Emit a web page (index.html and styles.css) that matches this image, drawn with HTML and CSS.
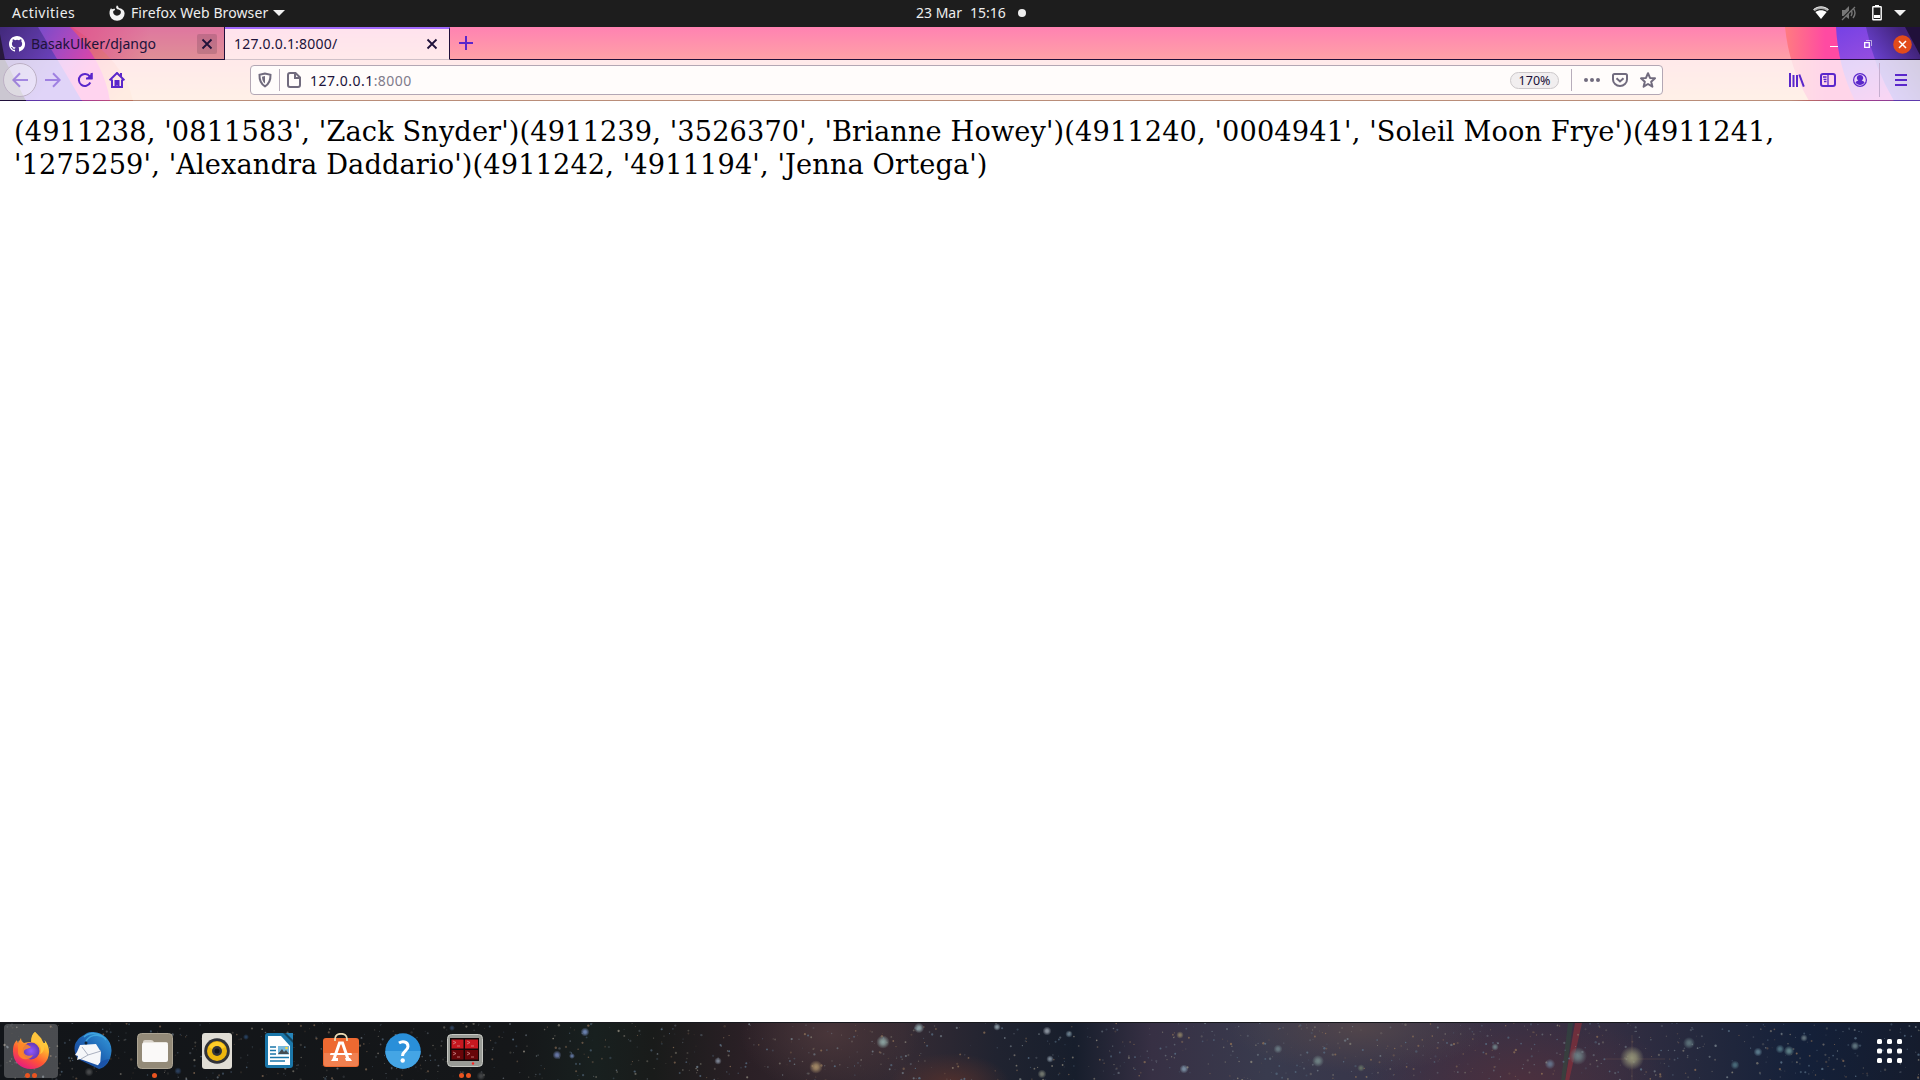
FILE: index.html
```
<!DOCTYPE html>
<html lang="en">
<head>
<meta charset="utf-8">
<title>127.0.0.1:8000/</title>
<link rel="stylesheet" href="styles.css">
</head>
<body>
<div class="desktop">
  <header class="topbar">
    <div class="topbar-left">
      <span class="activities">Activities</span>
      <svg class="app-icon" width="16" height="16" viewBox="0 0 16 16"><path fill="#f2f2f2" d="M8 0.2C9 1 9.6 2 9.7 3c3 .5 5.900 2 5.900 5.500A7.500 7.200 0 0 1 .5 8.600C.4 5.500 1.400 4 2.300 3c0 .7.2 1 .5 1.300C3.500 3.900 5 3.500 6.100 3.900L5.700 5.300 4.300 6c-.6 2.500 1.200 4.700 3.700 4.700 2.400 0 3.900-1.600 3.900-3.600C11.800 4.700 9.600 4.900 8.400 4.300 6.800 3.500 6.800 1.700 8 .2Z"/></svg>
      <span class="app-name">Firefox Web Browser</span>
      <svg width="12" height="6" viewBox="0 0 12 6"><path fill="#f2f2f2" d="M0 0h12L6 6z"/></svg>
    </div>
    <div class="clock"><span class="date">23 Mar</span><span class="time">15:16</span><i class="notice"></i></div>
    <div class="status">
      <svg width="16" height="14" viewBox="0 0 16 14"><path fill="#aaa" d="M.3 3.500C5 0 11 0 15.700 3.500L14.300 5.200C10.500 2.300 5.500 2.300 1.700 5.200z"/><path d="M.5 3.600C5-.1 11-.1 15.500 3.600" fill="none" stroke="#fff"/><path fill="#fff" d="M2.300 6C6 3.500 10 3.500 13.700 6L8 13z"/></svg>
      <svg width="16" height="16" viewBox="0 0 16 16"><path fill="#777" d="M1 5h3l4-4v13L4 11H1z"/><path d="M10 5q2 3 0 6M12 3q4 5 0 10" fill="none" stroke="#777" stroke-width="1.400"/><path d="M1 14 14 1" stroke="#1d1d1d" stroke-width="2"/><path d="M1 15 14 2" stroke="#777" stroke-width="1.300"/></svg>
      <svg width="10" height="16" viewBox="0 0 10 16"><path fill="#fff" d="M3 0h4v2H3z"/><rect x=".8" y="1.800" width="8.400" height="13" rx=".5" fill="none" stroke="#fff" stroke-width="1.400"/><path fill="#fff" d="M2 10h6v3H2z"/></svg>
      <svg width="12" height="6" viewBox="0 0 12 6"><path fill="#f2f2f2" d="M0 0h12L6 6z"/></svg>
    </div>
  </header>

  <section class="browser-chrome">
    <svg class="theme" width="1920" height="74" viewBox="0 0 1920 74" aria-hidden="true">
      <defs>
        <linearGradient id="sky" x1="0" y1="0" x2="0" y2="1"><stop offset="0" stop-color="#ff82b2"/><stop offset=".45" stop-color="#ffa2a6"/><stop offset="1" stop-color="#ffc09a"/></linearGradient>
        <linearGradient id="l1" gradientUnits="userSpaceOnUse" x1="0" y1="0" x2="60" y2="40"><stop offset="0" stop-color="#402485"/><stop offset="1" stop-color="#7946df"/></linearGradient>
        <linearGradient id="l2" gradientUnits="userSpaceOnUse" x1="40" y1="0" x2="95" y2="34"><stop offset="0" stop-color="#844de5"/><stop offset=".5" stop-color="#c04bd8"/><stop offset="1" stop-color="#ff46bb"/></linearGradient>
        <linearGradient id="l3" gradientUnits="userSpaceOnUse" x1="72" y1="0" x2="133" y2="60"><stop offset="0" stop-color="#ff4c90"/><stop offset="1" stop-color="#ffae80"/></linearGradient>
        <linearGradient id="l4" gradientUnits="userSpaceOnUse" x1="70" y1="0" x2="150" y2="0"><stop offset="0" stop-color="#ff5c9c"/><stop offset="1" stop-color="#ff5c9c" stop-opacity="0"/></linearGradient>
        <linearGradient id="r1"><stop offset="0" stop-color="#ff7c80"/><stop offset=".3" stop-color="#ff4aa2"/><stop offset="1" stop-color="#ff4aa2"/></linearGradient>
        <linearGradient id="r2" x1="0" y1="0" x2=".5" y2="1"><stop offset="0" stop-color="#7541e5"/><stop offset=".5" stop-color="#944ddf"/><stop offset="1" stop-color="#e050d0"/></linearGradient>
        <linearGradient id="r3" x1="0" y1="1" x2="1" y2="0"><stop offset=".2" stop-color="#784bec"/><stop offset=".8" stop-color="#42247c"/></linearGradient>
      </defs>
      <path fill="url(#sky)" d="M0 0h1920v74H0z"/>
      <path fill="url(#l4)" d="M70 0h80v33H96z"/>
      <path fill="url(#l3)" d="M0 0h72Q126 35 133 74H0z"/>
      <path fill="url(#l2)" d="M0 0h70Q104 34 110 74H0z"/>
      <path fill="url(#l1)" d="M0 0h38L82 74H0z"/>
      <path fill="#20103a" d="M0 7 5 33 26 74H0z"/>
      <path fill="url(#r1)" d="M1785 0Q1789 40 1809 74H1920V0z"/>
      <path fill="url(#r2)" d="M1836 0Q1838 40 1855 74H1920V0z"/>
      <path fill="url(#r3)" d="M1866 0Q1874 40 1894 74H1920V0z"/>
      <path fill="#20103a" d="M1905 0 1920 28V0z"/>
    </svg>
    <div class="tabstrip">
      <div class="tab">
        <svg class="favicon" width="16" height="16" viewBox="0 0 16 16"><path fill="#fff" d="M8 0C3.580 0 0 3.580 0 8c0 3.540 2.290 6.530 5.470 7.590.4.070.55-.17.55-.38v-1.490c-2.010.37-2.530-.49-2.690-.94-.09-.23-.48-.94-.82-1.130-.28-.15-.68-.52-.01-.53.630-.010 1.080.580 1.230.820.720 1.210 1.870.870 2.330.660.070-.520.280-.870.510-1.070-1.780-.2-3.640-.890-3.640-3.950 0-.870.310-1.590.820-2.150-.080-.2-.360-1.020.080-2.120 0 0 .670-.210 2.200.820a7.600 7.600 0 0 1 4 0c1.530-1.040 2.200-.820 2.200-.820.440 1.100.160 1.920.080 2.120.510.560.820 1.270.820 2.150 0 3.070-1.870 3.750-3.650 3.950.290.250.540.730.540 1.480v2.200c0 .210.150.460.550.380A8 8 0 0 0 8 0"/></svg>
        <span class="tab-title">BasakUlker/django</span>
        <span class="tab-close shaded"><svg width="12" height="12" viewBox="0 0 12 12"><path d="m1.500 1.500 9 9m0-9-9 9"/></svg></span>
      </div>
      <div class="tab selected">
        <span class="tab-title tab-title-local">127.0.0.1:8000/</span>
        <span class="tab-close"><svg width="12" height="12" viewBox="0 0 12 12"><path d="m1.500 1.500 9 9m0-9-9 9"/></svg></span>
      </div>
      <svg class="newtab" width="14" height="14" viewBox="0 0 14 14"><path d="M7 0v14M0 7h14" stroke="#5a27cb" stroke-width="2"/></svg>
      <div class="window-buttons">
        <svg width="8" height="8" viewBox="0 0 8 8"><path fill="#fff" d="M0 6h8v1H0z"/></svg>
        <svg width="8" height="8" viewBox="0 0 8 8"><path d="M2 .5h5.500V6" fill="none" stroke="#fff" opacity=".55"/><path d="M.7 2.700h4.600v4.600H.7z" fill="none" stroke="#fff" stroke-width="1.300"/></svg>
        <svg width="19" height="19" viewBox="0 0 19 19"><circle cx="9.500" cy="9.500" r="9.300" fill="#e24b1a"/><path d="m6 6 7 7m0-7-7 7" stroke="#fff" stroke-width="1.500"/></svg>
      </div>
    </div>
    <div class="toolbar">
      <div class="nav">
        <span class="back"><svg width="16" height="16" viewBox="0 0 16 16"><path d="M16 8H1.500M8 1.300 1.300 8 8 14.700" /></svg></span>
        <svg class="forward" width="16" height="16" viewBox="0 0 16 16"><path d="M0 8h14.500M8 1.300 14.700 8 8 14.700"/></svg>
        <svg class="strong" width="16" height="16" viewBox="0 0 16 16"><path d="M13.300 10.500A6 6 0 1 1 12.700 4.300M14.600 1v5.500H9"/><path d="M15.500.5V7H9z" fill="#5a27cb" stroke="none"/></svg>
        <svg class="strong" width="16" height="16" viewBox="0 0 16 16"><path d="M.6 8.300 8 1l7.400 7.300M3 7.500V15h10V7.500M12 1v3.500"/><path fill="#5a27cb" stroke="none" d="M5.500 8h5v8h-2v-2.500h-1V16h-2z"/></svg>
      </div>
      <div class="urlbar">
        <svg class="grey shield" width="14" height="16" viewBox="0 0 14 16"><path d="M7 1.500 1.500 2.700C1.300 8 2.300 11.500 7 14.300 11.700 11.500 12.700 8 12.500 2.700z"/><path stroke="none" fill="#716b7e" d="M7 4 4 4.700c0 3 .8 5 3 6.800z"/></svg>
        <i class="rule"></i>
        <svg class="grey page-icon" width="14" height="16" viewBox="0 0 14 16"><path d="M3 1h5.500L13 5.500V13q0 2-2 2H3q-2 0-2-2V3q0-2 2-2ZM8 1v5h5"/></svg>
        <span class="address">127.0.0.1<span class="port">:8000</span></span>
        <span class="zoom">170%</span>
        <i class="rule"></i>
        <svg class="dots" width="16" height="4" viewBox="0 0 16 4"><g fill="#716b7e" stroke="none"><circle cx="2" cy="2" r="2"/><circle cx="8" cy="2" r="2"/><circle cx="14" cy="2" r="2"/></g></svg>
        <svg class="grey pocket" width="16" height="14" viewBox="0 0 16 14"><path d="M2.500 1h11Q15 1 15 2.500V6.500a7 6.500 0 0 1-14 0V2.500Q1 1 2.500 1ZM4.500 5.200 8 8.500l3.500-3.300"/></svg>
        <svg class="grey star" width="16" height="16" viewBox="0 0 16 16"><path stroke-linejoin="round" d="m8 1.200 2 4.700 5 .4-3.800 3.400 1.200 5L8 12l-4.400 2.700 1.200-5L1 6.300l5-.4z"/></svg>
      </div>
      <div class="tools">
        <svg width="16" height="14" viewBox="0 0 16 14"><path d="M1 0v14M4.500 2v12M8 2v12M10.300 1.500l4.500 12.200"/></svg>
        <svg width="16" height="14" viewBox="0 0 16 14"><rect x="1" y="1" width="14" height="12" rx="2"/><path stroke-width="1.300" d="M8 1v12M3 4h3.500M3.500 6.300h3M4 8.500h2.500"/></svg>
        <svg width="14" height="14" viewBox="0 0 14 14"><circle cx="7" cy="7" r="6.400" stroke-width="1.200"/><path fill="#5a27cb" stroke="none" d="M7 2a3 3 0 0 1 1.700 5.600C10.800 8 11 9 11.500 9.500 10 12.800 4 12.800 2.500 9.500 3 9 3.200 8 5.300 7.600A3 3 0 0 1 7 2"/></svg>
        <i class="tool-rule"></i>
        <svg width="12" height="12" viewBox="0 0 12 12"><path d="M0 1h12M0 6h12M0 11h12"/></svg>
      </div>
    </div>
    <div class="chrome-edge"></div>
  </section>

  <main class="page">(4911238, '0811583', 'Zack Snyder')(4911239, '3526370', 'Brianne Howey')(4911240, '0004941', 'Soleil Moon Frye')(4911241, '1275259', 'Alexandra Daddario')(4911242, '4911194', 'Jenna Ortega')</main>

  <footer class="dock">
    <svg class="stars" width="1920" height="58" viewBox="0 0 1920 58" aria-hidden="true"></svg>
    <div class="launchers">
      <div class="launcher active">
        <svg width="36" height="37" viewBox="0 0 36 37">
          <defs><linearGradient id="fx" x1=".8" y1="0" x2=".25" y2="1"><stop offset="0" stop-color="#fff44f"/><stop offset=".35" stop-color="#ffb02e"/><stop offset=".65" stop-color="#ff5634"/><stop offset="1" stop-color="#e31587"/></linearGradient><radialGradient id="fxg"><stop offset="0" stop-color="#9059ff"/><stop offset="1" stop-color="#6338b5"/></radialGradient></defs>
          <path fill="url(#fx)" d="M22 0C25 3 28 6 29 10c1 1 2 1 3 1 0-1 0-2-.5-3C35 12 36 16 36 20 36 30 28 37 18 37S0 30 0 19.500C0 14 1 11 4 8c0 1 0 2 1 3l3-5c0 2 1 4 3 5 3-1 5-1 7-1 0-4 1-8 4-10Z"/>
          <circle cx="18" cy="19" r="8.500" fill="url(#fxg)"/>
          <path fill="#ff8a26" d="M5 12c5-1 10 0 13 3-1 2-6 1-7 4-1 4 5 6 9 4-3 7-14 5-15-2z" opacity=".85"/><path fill="#ffc43c" d="M19 10c7-1 11 6 8 12 3-1 5-5 4-10l-3-6-6-6c-3 3-4 6-3 10Z"/>
        </svg>
        <span class="pips"><i></i><i></i></span>
      </div>
      <div class="launcher">
        <svg width="38" height="37" viewBox="0 0 38 37">
          <defs><linearGradient id="tb" x1="1" y1="0" x2="0" y2="1"><stop offset="0" stop-color="#37a0e0"/><stop offset=".5" stop-color="#1d62b2"/><stop offset="1" stop-color="#183a8d"/></linearGradient></defs>
          <path fill="url(#tb)" d="M13 1C23-3 38 5 37.500 19 37 29 31 36 25 37L4 27C-1 20 0 12 3 9c2-4 6-5 10-8Z"/>
          <path d="M12 9C18 0 29 3 32 8M10 5c5-5 13-4 18-1" fill="none" stroke="#3fa5dd" stroke-width="1.500"/>
          <path fill="#f5f6f9" d="m6 13 16-1 5 8-1 14L9 28l-3-1-3 1 1-4-3-1 2-3z"/><path d="m8 15 6 8 13-4M14 23l-7 4" fill="none" stroke="#aab0bf"/>
          <path fill="#1b53a8" d="M23 36c1-5 5-8 12-9-2 5-5 9-12 9Z"/><circle cx="12" cy="11" r="1.500" fill="#123"/>
        </svg>
      </div>
      <div class="launcher">
        <svg width="36" height="36" viewBox="0 0 36 36"><rect x=".5" y=".5" width="35" height="35" rx="4" fill="#938a78" stroke="#aca493"/><path d="M6 11V9q0-2 2-2h6q2 0 3 2h12q2 0 2 2z" fill="#d8d2c9"/><rect x="5" y="9.500" width="26" height="19.500" rx="2" fill="#faf9f8"/></svg>
        <span class="pips"><i></i></span>
      </div>
      <div class="launcher">
        <svg width="30" height="36" viewBox="0 0 30 36"><rect width="30" height="36" rx="3" fill="#e0ddd5"/><circle cx="15" cy="18" r="12.800" fill="#303238"/><circle cx="15" cy="18" r="10" fill="#edb60e"/><path d="M7 14a9 9 0 0 1 16 0l-5 3h-6z" fill="#ffce29"/><circle cx="15" cy="18" r="5" fill="#33343a"/><circle cx="15" cy="18" r="2.500" fill="#14171d"/></svg>
      </div>
      <div class="launcher">
        <svg width="28" height="35" viewBox="0 0 28 35"><rect width="28" height="35" rx="3" fill="#1b77aa"/><path fill="#fff" d="M3 3h13l9 10v19H3z"/><path fill="#14445f" d="M18 0h10v10z"/><path fill="#2584b9" d="M21 0h7v7z"/><path d="M5 14h6M5 17.500h6M5 21h6M5 24.500h19M5 28h15" stroke="#1b77aa" stroke-width="1.500"/><rect x="13" y="13" width="11" height="8.500" fill="#78b9dd"/><path d="m13 21 4-5 2 3 2-2 3 4z" fill="#444c52"/><circle cx="21.500" cy="15" r="1.300" fill="#f6d544"/></svg>
      </div>
      <div class="launcher">
        <svg width="36" height="36" viewBox="0 0 36 36"><rect y="5" width="36" height="29" rx="3" fill="#ee6931"/><path d="M1 20h34v12q0 1-2 1H3q-2 0-2-1z" fill="#f18050"/><path d="M12 8V6c0-7 12-7 12 0v2" fill="none" stroke="#e9d9b3" stroke-width="1.800"/><path d="m11 26 5.500-16h3L25 26" fill="none" stroke="#fff" stroke-width="3"/><path fill="#fff" d="M8 20h20q1 0 1 2H7q0-2 1-2Zm2 5h5v3H8zm12 0h5l2 3h-6z"/></svg>
      </div>
      <div class="launcher">
        <svg width="36" height="36" viewBox="0 0 36 36"><circle cx="18" cy="18" r="17.700" fill="#298fd9"/><path fill="#44a5e5" d="M.3 18h35.400a17.700 17.700 0 0 1-35.400 0"/><path d="M14 10c3-2 9-2 9 3.500 0 4.500-5.500 4.500-5.500 9.500" fill="none" stroke="#fff" stroke-width="3"/><circle cx="17.700" cy="27.500" r="2.200" fill="#fff"/></svg>
      </div>
      <div class="launcher">
        <svg width="36" height="33" viewBox="0 0 36 33"><rect x=".5" y=".5" width="35" height="32" rx="4" fill="#999b96" stroke="#c7c8c3"/><rect x="3" y="4" width="29" height="23" fill="#110708"/><path fill="#c71820" d="M4.500 5.500h12v9h-12zm13.500 0h13v9H18z"/><path fill="#680509" d="M4.500 16h12v9.500h-12zM18 16h13v9.500H18z"/><path d="m6 7 3 1.500L6 10M10 12h3M20 7l3 1.500-3 1.500m4 2h3M6 18l3 1.500L6 21m4 2h3m7-5 3 1.500-3 1.500m4 2h3" fill="none" stroke="#d99" stroke-width=".7"/><circle cx="26" cy="29.500" r="1.200" fill="#f22"/></svg>
        <span class="pips"><i></i><i></i></span>
      </div>
    </div>
    <svg class="apps" width="25" height="24" viewBox="0 0 25 24"><g fill="#fff"><rect width="5" height="5" rx="1.500"/><rect x="10" width="5" height="5" rx="1.500"/><rect x="20" width="5" height="5" rx="1.500"/><rect y="9.500" width="5" height="5" rx="1.500"/><rect x="10" y="9.500" width="5" height="5" rx="1.500"/><rect x="20" y="9.500" width="5" height="5" rx="1.500"/><rect y="19" width="5" height="5" rx="1.500"/><rect x="10" y="19" width="5" height="5" rx="1.500"/><rect x="20" y="19" width="5" height="5" rx="1.500"/></g></svg>
  </footer>
</div>
<script src="stars.js"></script>
</body>
</html>
```
FILE: stars.js
```
// Scatter the wallpaper's stars: bright ones by position, faint ones from a fixed seed.
const bright = [
  [585, 9, 3, '#7189bb'], [557, 32, 3, '#6c7daf'], [572, 33, 2, '#657ba7'], [718, 38, 2.5, '#7e8797'],
  [919, 5, 3.5, '#94a9ad'], [883, 19, 4.5, '#8da4a2'], [816, 44, 4.5, '#a58b67'], [997, 4, 2.5, '#8d9da7'],
  [1047, 8, 3, '#929aa5'], [1069, 11, 2.5, '#6c8291'], [1180, 12, 2.5, '#8a7e64'], [1050, 36, 2.5, '#7f8c99'],
  [1042, 51, 3, '#777c72'], [1184, 46, 3, '#7c91a5'], [1278, 26, 3, '#6a7b83'], [1318, 38, 4, '#718486'],
  [1361, 45, 2.5, '#626f64'], [1578, 33, 6, '#6d7e83'], [1550, 41, 3.5, '#66758d'], [1632, 35, 8, '#929176'],
  [1495, 24, 2.5, '#6f8288'], [1689, 20, 4, '#5e737b'], [1758, 29, 3, '#5e7f91'], [1780, 26, 3, '#4e7180'],
  [1789, 28, 3.5, '#62858b'], [1735, 42, 3, '#4c6e7d'], [1804, 15, 2.5, '#677780'], [1855, 23, 3, '#637983'],
  [89, 49, 3, '#4c4e50'], [178, 48, 2.5, '#2c4262'], [246, 14, 2, '#284465'], [452, 5, 2, '#304664'], [481, 53, 3, '#454749']
];
let seed = 1723;
const rnd = () => (seed = (seed * 16807) % 2147483647) / 2147483647;
const tones = ['#8a857a', '#747e88', '#8a6e56', '#5b7288'];
let out = '<path d="M1565 58 1575 0h7l-13 58z" fill="#9b3039" opacity=".55"/><path d="M1561 58 1568 0h5l-8 58z" fill="#295b3c" opacity=".35"/><path d="M1632 12v46M1605 36h60" stroke="#8c6654" opacity=".25"/>';
for (let i = 0; i < 1300; i++) {
  const x = rnd() * 1920, y = rnd() * 58, r = 0.4 + rnd() * 0.8, o = (x < 500 ? 0.15 : 0.25) + rnd() * 0.6;
  out += `<circle cx="${x.toFixed(1)}" cy="${y.toFixed(1)}" r="${r.toFixed(2)}" fill="${tones[i % 4]}" opacity="${o.toFixed(2)}"/>`;
}
bright.forEach(([x, y, r, c], i) => {
  out += `<radialGradient id="s${i}"><stop offset="0" stop-color="${c}"/><stop offset=".35" stop-color="${c}" stop-opacity=".8"/><stop offset="1" stop-color="${c}" stop-opacity="0"/></radialGradient><circle cx="${x}" cy="${y}" r="${r * 1.5}" fill="url(#s${i})"/>`;
});
document.querySelector('.stars').innerHTML = out;
```
FILE: styles.css
```
* { box-sizing: border-box; }
body { margin: 0; background: #fff; }
svg { display: block; flex: none; }
.desktop { width: 1920px; height: 1080px; display: flex; flex-direction: column; overflow: hidden; font: 14px/20px "Noto Sans", sans-serif; }

.topbar { height: 27px; flex: none; display: grid; grid-template-columns: 1fr auto 1fr; align-items: center; padding-bottom: 1px; background: #1d1d1d; color: #eee; white-space: nowrap; }
.topbar-left { display: flex; align-items: center; padding-left: 12px; }
.activities { width: 97px; letter-spacing: .5px; }
.app-icon { margin-right: 6px; }
.app-name { width: 142px; letter-spacing: .1px; }
.clock { display: flex; align-items: center; width: 110px; margin-left: 22px; }
.date { width: 54px; }
.time { width: 48px; }
.notice { width: 8px; height: 8px; border-radius: 50%; background: #eee; }
.status { display: flex; align-items: center; justify-content: flex-end; padding-right: 14px; }
.status svg:nth-child(2) { margin-left: 12px; }
.status svg:nth-child(3) { margin-left: 15px; }
.status svg:nth-child(4) { margin-left: 12px; }

.browser-chrome { height: 74px; flex: none; position: relative; isolation: isolate; }
.theme { position: absolute; inset: 0; z-index: -1; }
.tabstrip { height: 33px; display: flex; align-items: center; border-bottom: 1px solid #20103a; color: #20123a; }
.tab { width: 225px; height: 32px; display: flex; align-items: center; padding: 2px 7px 0 9px; border-right: 1px solid #20103a; background: rgba(80, 64, 80, .18); }
.tab.selected { height: 33px; align-self: flex-start; padding: 0 10px 0 9px; border-top: 2px solid #a36aff; border-bottom: 1px solid #cfc0c8; background: rgba(255, 255, 255, .77); }
.tab-title-local { letter-spacing: .2px; }
.favicon { margin-right: 6px; }
.tab-close { width: 20px; height: 20px; margin-left: auto; display: grid; place-items: center; }
.selected .tab-close { margin-right: -3px; }
.tab-close.shaded { background: rgba(80, 50, 70, .22); border-radius: 2px; }
.tab-close path { stroke: #20123a; stroke-width: 1.8; }
.newtab { margin-left: 9px; }
.window-buttons { margin-left: auto; padding: 2px 8px 0 0; display: flex; align-items: center; }
.window-buttons svg:nth-child(2) { margin-left: 26px; }
.window-buttons svg:nth-child(3) { margin-left: 21px; }

.toolbar { height: 41px; display: flex; align-items: center; background: rgba(255, 255, 255, .77); padding-bottom: 1px; }
.chrome-edge { position: absolute; left: 0; right: 0; bottom: 0; height: 1px; background: linear-gradient(90deg, #20103a 26px, #5b35a8 26px, #713aa8 82px, #a53b91 82px, #b94a7c 110px, #b96f5b 110px 133px, #b98d79 133px 1790px, #b96a67 1809px, #a23d8c 1855px, #8e3e96 1893px, #5d3aad 1894px); }
.nav { width: 250px; display: flex; align-items: center; padding-left: 3px; }
.nav svg { fill: none; stroke: #5a27cb; stroke-width: 2; }
.back { width: 34px; height: 34px; display: grid; place-items: center; border: 1px solid #bdb0c5; border-radius: 50%; background: rgba(255, 255, 255, .35); }
.back svg, .forward { opacity: .48; }
.forward { margin-left: 8px; }
.strong { margin-left: 16px; }
.urlbar { width: 1413px; height: 30px; display: flex; align-items: center; border: 1px solid #b3a7b4; border-radius: 4px; background: rgba(255, 255, 255, .82); color: #20123a; }
.grey { fill: none; stroke: #716b7e; stroke-width: 2; }
.shield { margin: 0 7px; }
.rule { width: 1px; height: 22px; background: #b7adbb; flex: none; }
.page-icon { margin: 0 9px 0 7px; }
.address { letter-spacing: .48px; padding-top: 1px; }
.port { color: #807b8b; }
.zoom { width: 49px; height: 17px; margin: 0 12px 0 auto; border: 1px solid #ccc8ca; border-radius: 9px; background: #f1eeef; font-size: 12.5px; line-height: 16px; text-align: center; }
.dots { margin-left: 12px; }
.pocket { margin-left: 12px; }
.star { margin: 0 6px 0 12px; }
.tools { margin-left: auto; padding-right: 13px; display: flex; align-items: center; }
.tools svg { fill: none; stroke: #5a27cb; stroke-width: 2; margin-right: 17px; }
.tools svg:first-child { margin-right: 15px; }
.tools svg:nth-child(3) { margin-right: 12px; }
.tools svg:last-child { margin-right: 0; }
.tool-rule { width: 1px; height: 34px; margin-right: 15px; background: #c5aecf; }

.page { flex: 1; padding: 14px; font-family: "DejaVu Serif", serif; font-size: 27.2px; line-height: 33px; letter-spacing: .122px; color: #000; }

.dock { height: 58px; flex: none; position: relative; isolation: isolate; display: flex; align-items: center; justify-content: space-between; padding: 0 18px 1px 0; border-top: 1px solid #18191e;
  background: radial-gradient(ellipse 90px 60px at 830px 10px, #49363a, transparent), radial-gradient(ellipse 130px 45px at 1360px 5px, #51454b, transparent), radial-gradient(ellipse 150px 70px at 1520px 58px, #4c303e, transparent), radial-gradient(ellipse 60px 30px at 950px 60px, #51302d, transparent), linear-gradient(90deg, #121519 0, #151719 27%, #18201f 31%, #191b1a 34%, #2b2026 39%, #352b34 47%, #202330 52%, #171e2c 56%, #373044 60%, #393b4e 66%, #373247 75%, #332e42 84%, #23283d 89%, #142039 94%, #151c2d 100%); }
.stars { position: absolute; inset: 0; z-index: -1; }
.launchers { display: flex; gap: 8px; padding-left: 4px; }
.launcher { width: 54px; height: 54px; position: relative; display: grid; place-items: center; border-radius: 4px; }
.launcher > svg { margin-bottom: 1px; }
.active { background: rgba(255, 255, 255, .24); }
.pips { position: absolute; left: 0; right: 1px; bottom: 0; display: flex; justify-content: center; gap: 2px; }
.pips i { width: 5px; height: 5px; border-radius: 50%; background: #ea5420; }
```
